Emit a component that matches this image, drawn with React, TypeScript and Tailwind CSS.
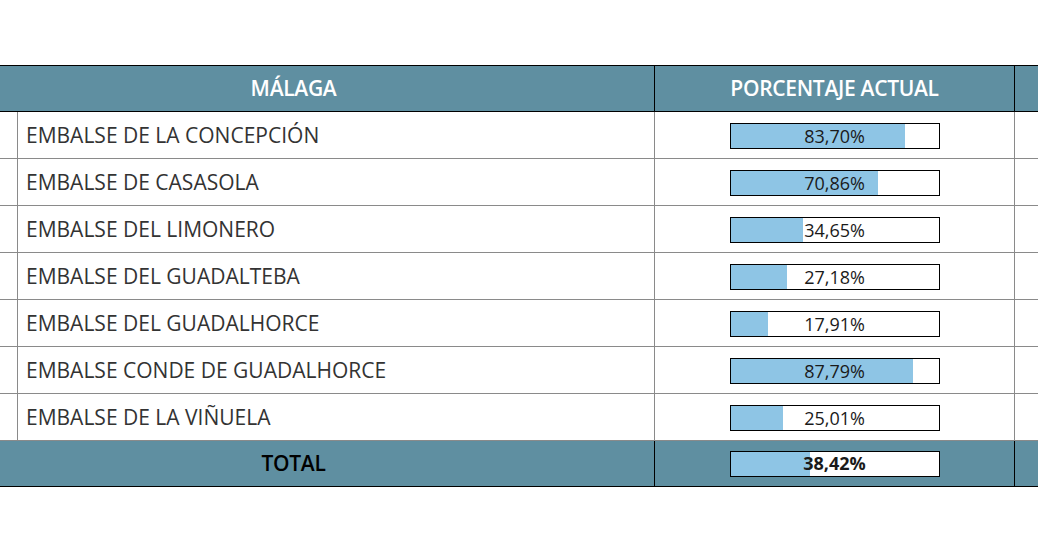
import React from "react";

const embalses = [
  { name: "EMBALSE DE LA CONCEPCIÓN", pct: 83.7 },
  { name: "EMBALSE DE CASASOLA", pct: 70.86 },
  { name: "EMBALSE DEL LIMONERO", pct: 34.65 },
  { name: "EMBALSE DEL GUADALTEBA", pct: 27.18 },
  { name: "EMBALSE DEL GUADALHORCE", pct: 17.91 },
  { name: "EMBALSE CONDE DE GUADALHORCE", pct: 87.79 },
  { name: "EMBALSE DE LA VIÑUELA", pct: 25.01 },
];

const fmt = (n: number) => n.toFixed(2).replace(".", ",") + "%";

const Bar: React.FC<{ pct: number; bold?: boolean }> = ({ pct, bold }) => (
  <div className="relative mx-auto h-[26px] w-[210px] border border-black bg-white">
    <div className="absolute inset-y-0 left-0 bg-[#8ec5e5]" style={{ width: `${pct}%` }} />
    <span
      className={`relative flex h-full items-center justify-center text-[18px] text-[#1a1a1a] ${
        bold ? "font-bold" : ""
      }`}
    >
      {fmt(pct)}
    </span>
  </div>
);

export default function App() {
  return (
    <div className="h-[543px] w-full overflow-hidden bg-white pt-[65px] font-['Open_Sans',sans-serif]">
      <table className="ml-[-68px] w-[1172px] table-fixed border-collapse">
        <colgroup>
          <col className="w-[85px]" />
          <col className="w-[637px]" />
          <col className="w-[360px]" />
          <col className="w-[90px]" />
        </colgroup>
        <thead>
          <tr className="h-[46px] bg-[#5f8fa1] text-white">
            <th colSpan={2} className="border border-black text-[21px] font-semibold tracking-[-0.3px]">
              MÁLAGA
            </th>
            <th className="border border-black text-[21px] font-semibold tracking-[-0.3px]">
              PORCENTAJE ACTUAL
            </th>
            <th className="border border-black" />
          </tr>
        </thead>
        <tbody>
          {embalses.map((e) => (
            <tr key={e.name} className="h-[47px]">
              <td className="border border-[#8a8a8a]" />
              <td className="border border-[#8a8a8a] pl-[8px] pt-[2px] text-[21px] text-[#333333]">{e.name}</td>
              <td className="border border-[#8a8a8a] pt-[2px]">
                <Bar pct={e.pct} />
              </td>
              <td className="border border-[#8a8a8a]" />
            </tr>
          ))}
          <tr className="h-[46px] bg-[#5f8fa1]">
            <td colSpan={2} className="border border-black text-center text-[21px] font-semibold tracking-[-0.3px] text-black">
              TOTAL
            </td>
            <td className="border border-black">
              <Bar pct={38.42} bold />
            </td>
            <td className="border border-black" />
          </tr>
        </tbody>
      </table>
    </div>
  );
}
